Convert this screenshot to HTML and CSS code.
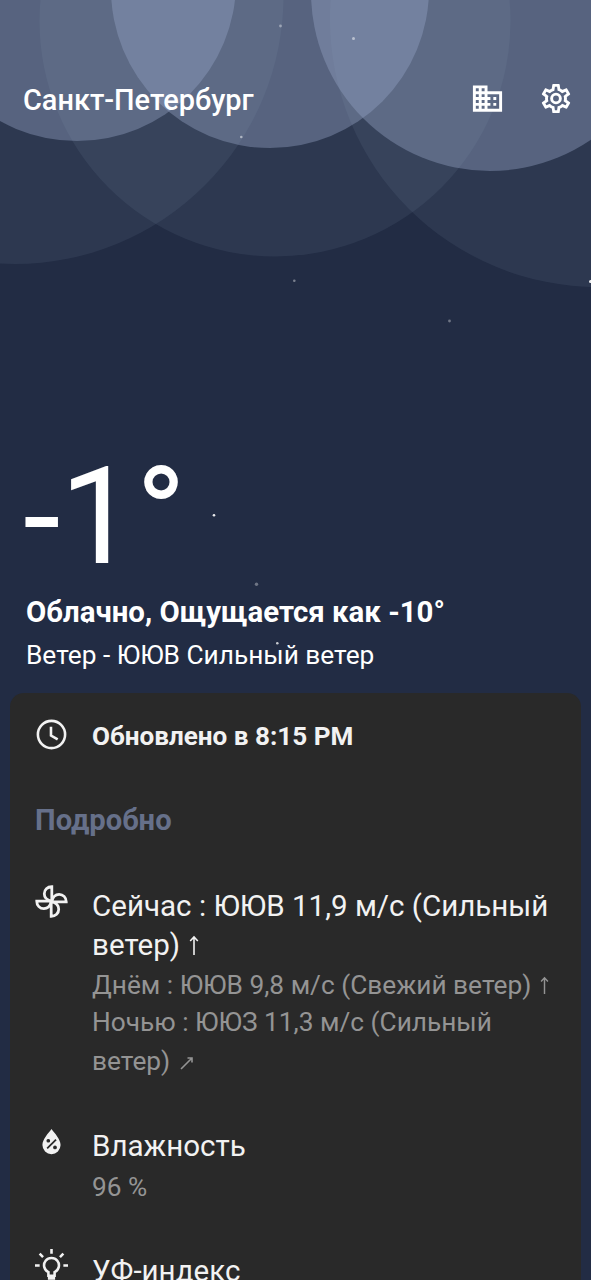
FILE: index.html
```html
<!DOCTYPE html>
<html lang="ru">
<head>
<meta charset="utf-8">
<title>Погода</title>
<link rel="stylesheet" href="styles.css">
</head>
<body>
<main class="screen">
  <svg class="sky" viewBox="0 0 591 700" aria-hidden="true">
    <g fill="#b0cbe2" fill-opacity=".08">
      <circle cx="15" cy="-4.500" r="268.500"/>
      <circle cx="275" cy="21" r="235.500"/>
      <circle cx="598" cy="19" r="268"/>
    </g>
    <g fill="#96a5c5" fill-opacity=".4">
      <circle cx="77" cy="-18" r="159"/>
      <circle cx="270" cy="-11" r="159"/>
      <circle cx="490" cy="-8" r="179"/>
    </g>
    <g fill="#fff">
      <circle cx="280.500" cy="26" r="1.400" opacity=".4"/>
      <circle cx="353.500" cy="38.500" r="1.500" opacity=".5"/>
      <circle cx="241.300" cy="137" r="1.300" opacity=".5"/>
      <circle cx="294.300" cy="280.700" r="1.300" opacity=".4"/>
      <circle cx="590.500" cy="281.500" r="1.500" opacity=".9"/>
      <circle cx="449.500" cy="321" r="1.400" opacity=".35"/>
      <circle cx="214" cy="515.300" r="1.300" opacity=".9"/>
      <circle cx="256.500" cy="584.300" r="1.700" opacity=".35"/>
      <circle cx="277.300" cy="643.300" r="1.300" opacity=".75"/>
      <circle cx="87" cy="622" r="1.200" opacity=".8"/>
    </g>
  </svg>

  <header class="topbar">
    <h1 class="city">Санкт-Петербург</h1>
    <svg class="icon icon-city" viewBox="0 0 24 24"><path fill-rule="evenodd" d="M12 7V3H2v18h20V7H12zM6 19H4v-2h2v2zm0-4H4v-2h2v2zm0-4H4V9h2v2zm0-4H4V5h2v2zm4 12H8v-2h2v2zm0-4H8v-2h2v2zm0-4H8V9h2v2zm0-4H8V5h2v2zm10 12h-8v-2h2v-2h-2v-2h2v-2h-2V9h8v10zm-2-8h-2v2h2v-2zm0 4h-2v2h2v-2z"/></svg>
    <svg class="icon icon-gear" viewBox="0 0 24 24"><path d="M12,8A4,4 0 0,1 16,12A4,4 0 0,1 12,16A4,4 0 0,1 8,12A4,4 0 0,1 12,8M12,10A2,2 0 0,0 10,12A2,2 0 0,0 12,14A2,2 0 0,0 14,12A2,2 0 0,0 12,10M10,22C9.750,22 9.540,21.820 9.500,21.580L9.130,18.930C8.500,18.680 7.960,18.340 7.440,17.940L4.950,18.950C4.730,19.030 4.460,18.950 4.340,18.730L2.340,15.270C2.210,15.050 2.270,14.780 2.460,14.630L4.570,12.970L4.500,12L4.570,11L2.460,9.370C2.270,9.220 2.210,8.950 2.340,8.730L4.340,5.270C4.460,5.050 4.730,4.960 4.950,5.050L7.440,6.050C7.960,5.660 8.500,5.320 9.130,5.070L9.500,2.420C9.540,2.180 9.750,2 10,2H14C14.250,2 14.460,2.180 14.500,2.420L14.870,5.070C15.500,5.320 16.040,5.660 16.560,6.050L19.050,5.050C19.270,4.960 19.540,5.050 19.660,5.270L21.660,8.730C21.790,8.950 21.730,9.220 21.540,9.370L19.430,11L19.500,12L19.430,13L21.540,14.630C21.730,14.780 21.790,15.050 21.660,15.270L19.660,18.730C19.540,18.950 19.270,19.040 19.050,18.950L16.560,17.950C16.040,18.340 15.500,18.680 14.870,18.930L14.500,21.580C14.460,21.820 14.250,22 14,22H10M11.250,4L10.880,6.610C9.680,6.860 8.620,7.500 7.850,8.390L5.440,7.350L4.690,8.650L6.800,10.200C6.400,11.370 6.400,12.640 6.800,13.800L4.680,15.360L5.430,16.660L7.860,15.620C8.630,16.500 9.680,17.140 10.870,17.380L11.240,20H12.760L13.130,17.390C14.320,17.140 15.370,16.500 16.140,15.620L18.570,16.660L19.320,15.360L17.200,13.810C17.600,12.640 17.600,11.370 17.200,10.200L19.310,8.650L18.560,7.350L16.150,8.390C15.380,7.500 14.320,6.860 13.120,6.620L12.750,4H11.250Z"/></svg>
  </header>

  <section class="now">
    <div class="temp">-1°</div>
    <div class="summary">Облачно, Ощущается как -10°</div>
    <div class="wind">Ветер - ЮЮВ Сильный ветер</div>
  </section>

  <section class="card">
    <div class="row updated">
      <svg class="row-icon" viewBox="0 0 32 32"><g fill="none" stroke="#f2f2f2" stroke-width="2.500"><circle cx="16" cy="16" r="13.200"/><path d="M15.500 8.500V17l6.500 3.800"/></g></svg>
      <div class="updated-text">Обновлено в 8:15 PM</div>
    </div>
    <h2 class="heading">Подробно</h2>
    <div class="row row-wind">
      <svg class="row-icon" viewBox="0 0 32 32"><g fill="none" stroke="#f2f2f2" stroke-width="2.700">
        <path id="blade" d="M16.300 16V1.700C12 1.700 9 4.800 9 8.600C9 12 11.500 14.800 16.300 16"/>
        <use href="#blade" transform="rotate(90 16 16)"/><use href="#blade" transform="rotate(180 16 16)"/><use href="#blade" transform="rotate(270 16 16)"/>
      </g></svg>
      <div class="row-body">
        <div class="primary">Сейчас : ЮЮВ 11,9 м/с (Сильный<br>ветер) <svg class="arrow" viewBox="0 0 12 20"><path d="M6 20V2M2.200 6 6 2l3.800 4"/></svg></div>
        <div class="secondary day">Днём : ЮЮВ 9,8 м/с (Свежий ветер) <svg class="arrow arrow-s" viewBox="0 0 12 20"><path d="M6 20V2M2.200 6 6 2l3.800 4"/></svg></div>
        <div class="secondary night">Ночью : ЮЮЗ 11,3 м/с (Сильный<br>ветер) <svg class="arrow arrow-ne" viewBox="0 0 14 14"><path d="M1 13 12 2M7.500 2H12v4.500"/></svg></div>
      </div>
    </div>
    <div class="row row-humidity">
      <svg class="row-icon" viewBox="0 0 32 32"><path fill="#f2f2f2" d="M16 3C13 7 7.200 13 7.200 18.500a8.800 8.800 0 0 0 17.600 0C24.800 13 19 7 16 3z"/><g stroke="#292929" fill="#292929"><path stroke-width="1.700" d="m11.800 21.800 8.600-8.600"/><circle cx="12.900" cy="14.300" r="1.300"/><circle cx="19.400" cy="20.800" r="1.300"/></g></svg>
      <div class="row-body">
        <div class="primary">Влажность</div>
        <div class="secondary humidity-value">96 %</div>
      </div>
    </div>
    <div class="row row-uv">
      <svg class="row-icon" viewBox="0 0 32 32"><g fill="none" stroke="#f2f2f2" stroke-width="2.500"><path d="M13 26v-3.600a7.200 7.200 0 1 1 6 0V26zM12.500 28.500h7M16 0v4.700M0 16h4.500M27.500 16H32M4.500 4.500l3.300 3.300M27.500 4.500l-3.300 3.300"/></g></svg>
      <div class="row-body">
        <div class="primary">УФ-индекс</div>
      </div>
    </div>
  </section>
</main>
</body>
</html>
```
FILE: styles.css
```css
* { box-sizing: border-box; }
body { margin: 0; background: #222c44; color: #fff; font-family: Roboto, sans-serif; }
.screen { position: relative; width: 591px; height: 1280px; overflow: hidden; display: flex; flex-direction: column; }
.sky { position: absolute; top: 0; left: 0; width: 591px; height: 700px; }
.topbar, .now, .card { position: relative; }
.topbar { display: flex; align-items: flex-start; height: 60px; margin-top: 69px; padding: 0 17px 0 23px; flex: none; }
.city { margin: 0; flex: 1; font-size: 28.9px; font-weight: 500; line-height: 62px; white-space: nowrap; }
.icon { width: 35px; height: 35px; margin-top: 12px; fill: #fff; }
.icon-gear { width: 36px; height: 35px; margin-left: 33px; }
.now { height: 564px; padding: 318px 0 0 26px; flex: none; white-space: nowrap; }
.temp { margin-left: -3px; font-size: 136px; line-height: 140px; letter-spacing: -0.8px; }
.summary { margin-top: 3px; font-size: 29.4px; font-weight: 700; line-height: 44px; }
.wind { font-size: 26.25px; line-height: 42px; }
.card { flex: 1; margin: 0 10px; padding: 0 25px; background: #292929; border-radius: 14px 14px 0 0; color: #f2f2f2; white-space: nowrap; }
.row { display: flex; align-items: flex-start; gap: 24px; }
.row-icon { flex: none; width: 33px; height: 33px; overflow: visible; }
.updated { padding-top: 25px; height: 100px; }
.updated-text { font-size: 26.1px; font-weight: 700; line-height: 36px; }
.heading { margin: 0; height: 56px; font-size: 29.2px; font-weight: 700; line-height: 54px; color: #66708a; }
.row-wind { padding-top: 38px; height: 275px; }
.row-wind .row-icon { margin-top: -2px; }
.primary { font-size: 29.55px; line-height: 39px; }
.secondary { font-size: 26.25px; line-height: 39px; color: #949494; }
.day { line-height: 40px; height: 38px; }
.humidity-value { line-height: 43px; }
.arrow { display: inline-block; width: 12px; height: 20px; margin-left: 1px; vertical-align: 0; fill: none; stroke: currentColor; stroke-width: 1.6px; }
.arrow-s { width: 11px; height: 18px; }
.arrow-ne { width: 14px; height: 14px; margin-left: 3px; vertical-align: 0; }
.row-humidity { height: 126px; padding-top: 3px; }
.row-humidity .row-icon { margin-top: -1px; }
.row-uv .row-icon { margin-top: -1px; }
.row-uv .primary { line-height: 42px; }
```
